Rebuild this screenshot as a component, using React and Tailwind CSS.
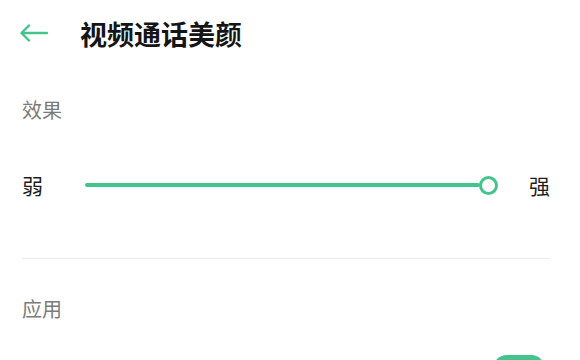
import React from "react";

export default function App() {
  const font = { fontFamily: '"Noto Sans CJK SC", "Noto Sans", sans-serif' };
  return (
    <div className="w-[580px] h-[360px] bg-white overflow-hidden font-['Noto_Sans_CJK_SC',sans-serif]" style={font}>
      <div className="flex items-center h-[66px] pl-[20px]">
        <svg width="28" height="18" viewBox="0 0 28 18" fill="none" stroke="#45c38c" strokeWidth="2.4" strokeLinecap="round" strokeLinejoin="round">
          <path d="M27 9H2" />
          <path d="M9 1.5L1.5 9L9 16.5" />
        </svg>
        <div className="ml-[32px] text-[27px] leading-none font-bold text-[#151515]">视频通话美颜</div>
      </div>
      <div className="pl-[22px] pr-[30px] flex flex-col">
        <div className="mt-[34px] text-[20px] leading-none text-[#7b7b7b]">效果</div>
        <div className="mt-[45px] h-[40px] flex items-center">
          <div className="text-[21px] leading-none text-[#1e1e1e]">弱</div>
          <div className="ml-[42px] flex-1 h-[4px] rounded-full bg-[#45c38c]"></div>
          <div className="w-[19px] h-[19px] -ml-[1px] rounded-full border-[3px] border-[#45c38c] bg-white"></div>
          <div className="ml-[31px] text-[21px] leading-none text-[#1e1e1e]">强</div>
        </div>
        <div className="mt-[53px] border-t border-[#ececec]"></div>
        <div className="mt-[40px] text-[20px] leading-none text-[#7b7b7b]">应用</div>
        <div className="mt-[36px] self-end mr-[5px] w-[52px] h-[28px] rounded-full bg-[#45c38c]"></div>
      </div>
    </div>
  );
}
